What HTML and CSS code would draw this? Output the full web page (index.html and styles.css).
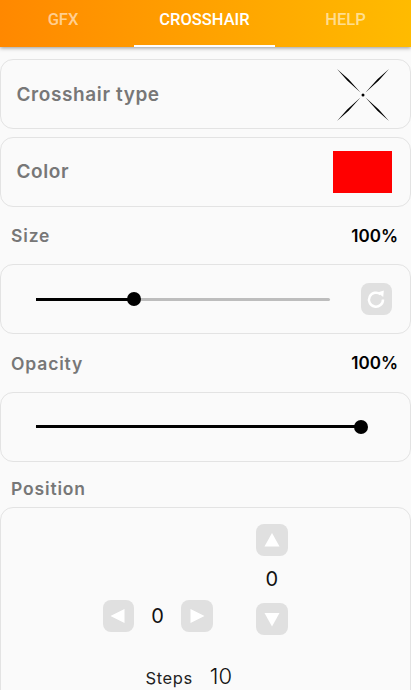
FILE: index.html
```html
<!DOCTYPE html>
<html lang="en">
<head>
<meta charset="utf-8">
<title>Crosshair</title>
<link rel="stylesheet" href="styles.css">
</head>
<body>
<header class="tabs">
  <div class="tab tab-left">GFX</div>
  <div class="tab active">CROSSHAIR</div>
  <div class="tab tab-right">HELP</div>
</header>
<main class="content">
  <section class="card row-card first">
    <span class="card-title">Crosshair type</span>
    <svg class="crosshair" viewBox="0 0 54 54" width="54" height="54" aria-hidden="true">
      <path d="M1 1 L12.6 11.2 L24.5 24.5 L11.2 12.6 Z M53 1 L41.4 11.2 L29.5 24.5 L42.8 12.6 Z M1 53 L12.6 42.8 L24.5 29.5 L11.2 41.4 Z M53 53 L41.4 42.8 L29.5 29.5 L42.8 41.4 Z" fill="#000"/>
      <circle cx="27" cy="27" r="1.5" fill="#000"/>
    </svg>
  </section>
  <section class="card row-card color-card">
    <span class="card-title">Color</span>
    <div class="swatch"></div>
  </section>
  <div class="label-row size-label">
    <span class="label">Size</span><span class="value">100%</span>
  </div>
  <section class="card slider-card">
    <div class="slider size-slider">
      <div class="fill fill-size"></div>
      <div class="thumb thumb-size"></div>
    </div>
    <button class="btn reset" aria-label="Reset">
      <svg viewBox="0 0 20 20" width="20" height="20" aria-hidden="true">
        <path d="M14.6 5.4 A7 7 0 1 0 17 10.5" fill="none" stroke="#fff" stroke-width="2.5"/>
        <path d="M11.5 3.4 L17.8 1.6 L17.2 8 Z" fill="#fff"/>
      </svg>
    </button>
  </section>
  <div class="label-row opacity-label">
    <span class="label">Opacity</span><span class="value">100%</span>
  </div>
  <section class="card slider-card opacity-card">
    <div class="slider opacity-slider">
      <div class="fill fill-full"></div>
      <div class="thumb thumb-full"></div>
    </div>
  </section>
  <div class="label-row position-label">
    <span class="label">Position</span>
  </div>
  <section class="card position-card">
    <div class="pos-grid">
      <div class="horizontal">
        <button class="btn" aria-label="Left"><svg viewBox="0 0 32 32" width="32" height="32" aria-hidden="true"><path d="M8.5 16 L22.5 9 V23 Z" fill="#fff"/></svg></button>
        <span class="num h-num">0</span>
        <button class="btn" aria-label="Right"><svg viewBox="0 0 32 32" width="32" height="32" aria-hidden="true"><path d="M23.5 16 L9.5 9 V23 Z" fill="#fff"/></svg></button>
      </div>
      <div class="vertical">
        <button class="btn" aria-label="Up"><svg viewBox="0 0 32 32" width="32" height="32" aria-hidden="true"><path d="M16 9 L23.5 22.5 H8.5 Z" fill="#fff"/></svg></button>
        <span class="num v-num">0</span>
        <button class="btn" aria-label="Down"><svg viewBox="0 0 32 32" width="32" height="32" aria-hidden="true"><path d="M16 23.5 L23.5 10 H8.5 Z" fill="#fff"/></svg></button>
      </div>
    </div>
    <div class="steps"><span class="steps-label">Steps</span><span class="steps-num">10</span></div>
  </section>
</main>
</body>
</html>
```
FILE: styles.css
```css
* { box-sizing: border-box; }
html, body { margin: 0; height: 690px; overflow: hidden; }
body { background: #fafafa; font-family: Inter, sans-serif; color: #000; width: 411px; }
.tabs {
  height: 47px;
  display: grid;
  grid-template-columns: 134px 141px 136px;
  background: linear-gradient(90deg, #ff8800, #ffbb00);
  box-shadow: 0 1px 4px rgba(0,0,0,.4);
  font-family: Roboto, sans-serif;
  font-weight: 500;
  font-size: 16.5px;
  position: relative;
}
.tab { color: rgba(255,255,255,.58); display: flex; align-items: center; justify-content: center; padding-bottom: 8px; }
.tab-left { padding-right: 8px; }
.tab-right { padding-left: 5px; }
.tab.active { color: #fff; border-bottom: 2px solid #fff; padding-bottom: 6px; }
.content { display: flex; flex-direction: column; }
.card { background: #fafafa; border: 1.5px solid #e3e3e3; border-radius: 13px; width: 411px; margin-left: -0.5px; }
.row-card { height: 70px; display: flex; align-items: center; justify-content: space-between; }
.first { margin-top: 12px; padding: 0 20px 0 16px; }
.color-card { margin-top: 7.5px; padding: 0 17.5px 0 16px; }
.card-title { font-size: 19px; font-weight: 600; color: #777; letter-spacing: .6px; }
.crosshair { display: block; margin-top: 1px; }
.swatch { width: 59px; height: 42px; background: #ff0000; }
.label-row { display: flex; justify-content: space-between; align-items: center; padding: 1px 13px 0 11px; height: 24px; }
.size-label { margin-top: 16.5px; }
.opacity-label { margin-top: 16.5px; }
.position-label { margin-top: 14px; }
.label { font-size: 17.5px; font-weight: 600; color: #777; letter-spacing: .85px; }
.value { font-size: 17px; font-weight: 600; color: #000; }
.slider-card { height: 70px; margin-top: 17px; display: flex; align-items: center; padding: 0 17.5px 0 35.5px; justify-content: space-between; }
.opacity-card { margin-top: 17px; }
.position-label + .card { margin-top: 7px; }
.slider { position: relative; height: 3px; border-radius: 2px; background: #bdbdbd; }
.size-slider { width: 294px; }
.opacity-slider { width: 325px; background: #000; }
.fill { position: absolute; left: 0; top: 0; height: 3px; background: #000; }
.fill-size { width: 98px; }
.fill-full { width: 100%; }
.thumb { position: absolute; top: -5.5px; width: 14px; height: 14px; border-radius: 50%; background: #000; }
.thumb-size { left: 91px; }
.thumb-full { right: -7px; }
.btn { width: 31.5px; height: 31.5px; border: 0; padding: 0; border-radius: 8px; background: #e0e0e0; display: flex; align-items: center; justify-content: center; }
.btn svg { flex: none; }
.position-card { height: 240px; padding-top: 16.5px; }
.pos-grid { display: flex; align-items: flex-start; margin-left: 102px; }
.horizontal { display: flex; align-items: center; margin-top: 76px; }
.vertical { display: flex; flex-direction: column; align-items: center; margin-left: 43.5px; }
.num { font-size: 20px; font-weight: 400; color: #111; text-align: center; }
.h-num { width: 47px; }
.v-num { height: 47.5px; display: flex; align-items: center; }
.steps { display: flex; align-items: baseline; margin: 28px 0 0 145px; gap: 17px; }
.steps-label { font-size: 16.5px; font-weight: 400; color: #222; letter-spacing: .6px; }
.steps-num { font-size: 22px; font-weight: 300; color: #111; }
```
